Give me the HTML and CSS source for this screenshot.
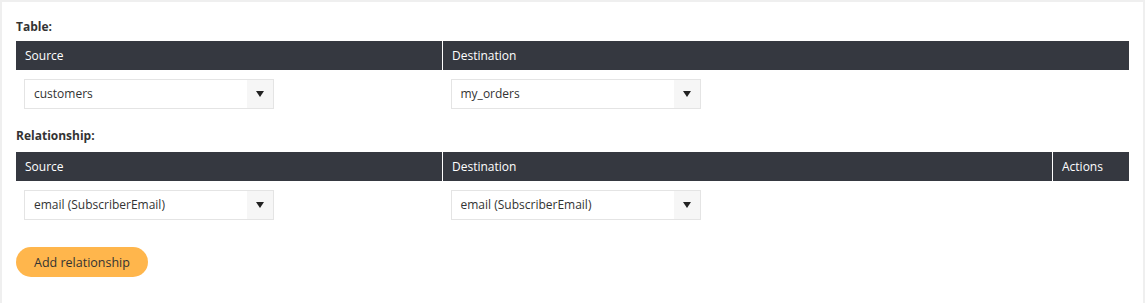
FILE: index.html
```html
<!DOCTYPE html>
<html lang="en">
<head>
  <meta charset="UTF-8">
  <title>Table relationship</title>
  <link rel="stylesheet" href="styles.css">
</head>
<body>
  <div class="panel">
    <h3 class="label">Table:</h3>
    <table class="grid">
      <thead>
        <tr>
          <th class="col-source">Source</th>
          <th>Destination</th>
        </tr>
      </thead>
      <tbody>
        <tr>
          <td><div class="select"><span class="value">customers</span><span class="arrow"></span></div></td>
          <td><div class="select"><span class="value">my_orders</span><span class="arrow"></span></div></td>
        </tr>
      </tbody>
    </table>

    <h3 class="label label-spaced">Relationship:</h3>
    <table class="grid">
      <thead>
        <tr>
          <th class="col-source">Source</th>
          <th>Destination</th>
          <th class="col-actions">Actions</th>
        </tr>
      </thead>
      <tbody>
        <tr>
          <td><div class="select"><span class="value">email (SubscriberEmail)</span><span class="arrow"></span></div></td>
          <td><div class="select"><span class="value">email (SubscriberEmail)</span><span class="arrow"></span></div></td>
          <td></td>
        </tr>
      </tbody>
    </table>

    <button type="button" class="btn-add">Add relationship</button>
  </div>
</body>
</html>
```

FILE: styles.css
```css
/* General Styles */
body {
  margin: 0;
  padding: 2px 2px 0 2px;
  background-color: #efefef;
  font-family: "Open Sans", "Noto Sans", sans-serif;
  font-size: 12px;
  color: #333;
}

.panel {
  background-color: #fff;
  padding: 15px 14px 25px 14px;
  height: 261px;
}

.label {
  margin: 0 0 4px 0;
  font-size: 12px;
  font-weight: bold;
  color: #333;
  line-height: 20px;
}

.label-spaced {
  margin-bottom: 6px;
}

/* Table Styles */
.grid {
  width: 100%;
  border-collapse: collapse;
  margin-bottom: 17px;
}

.grid th {
  background-color: #353840;
  color: #fff;
  font-weight: normal;
  text-align: left;
  height: 29px;
  padding: 0 9px;
  border-left: 1px solid #fff;
}

.grid th:first-child {
  border-left: none;
}

.grid .col-source {
  width: 408px;
}

.grid .col-actions {
  width: 58px;
}

.grid td {
  padding: 9px 8px 0 8px;
  vertical-align: top;
}

/* Select Styles */
.select {
  display: flex;
  width: 250px;
  height: 30px;
  box-sizing: border-box;
  border: 1px solid #e4e4e4;
}

.select .value {
  flex: 1;
  line-height: 28px;
  padding-left: 9px;
  color: #333;
}

.select .arrow {
  width: 26px;
  background-color: #f6f6f6;
  display: flex;
  align-items: center;
  justify-content: center;
}

.select .arrow::after {
  content: "";
  border-left: 4px solid transparent;
  border-right: 4px solid transparent;
  border-top: 6px solid #222;
}

/* Button Styles */
.btn-add {
  margin-top: 10px;
  height: 30px;
  padding: 0 18px;
  border: none;
  border-radius: 15px;
  background-color: #ffb64c;
  color: #333;
  font-family: inherit;
  font-size: 12.5px;
  cursor: pointer;
}
```
